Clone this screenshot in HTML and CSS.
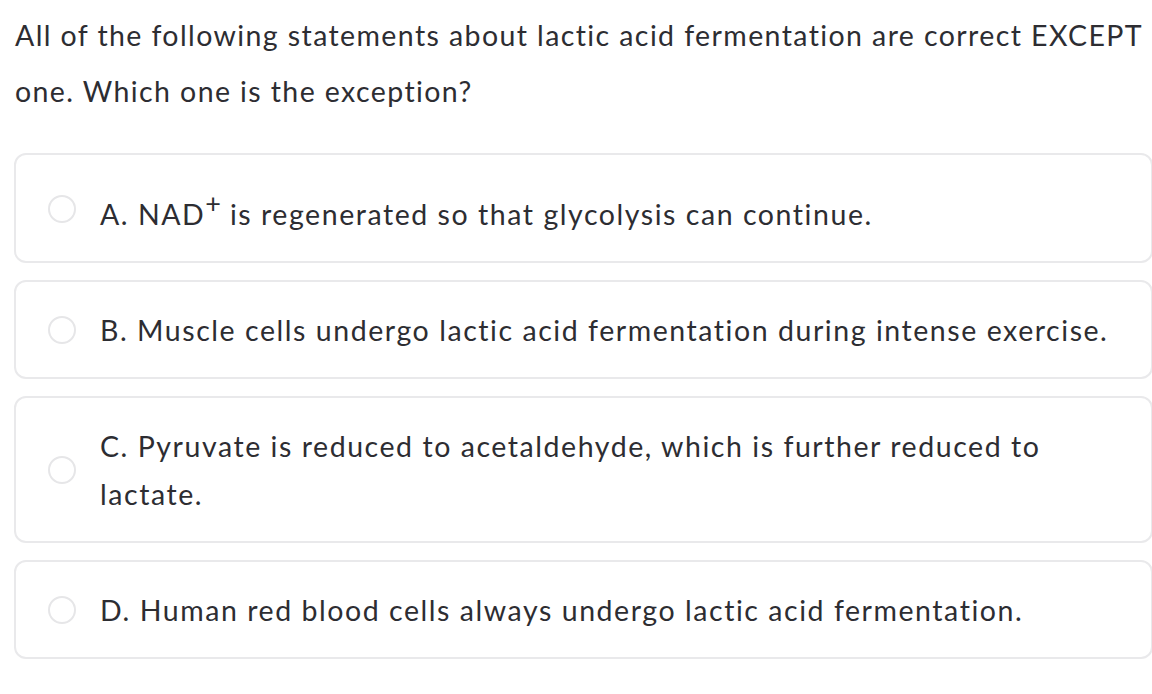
FILE: index.html
```html
<!DOCTYPE html>
<html lang="en">
<head>
<meta charset="utf-8">
<title>Question</title>
<link rel="stylesheet" href="styles.css">
</head>
<body>
<main class="quiz">
  <p class="question">All of the following statements about lactic acid fermentation are correct EXCEPT one. Which one is the exception?</p>
  <div class="options">
    <label class="option">
      <span class="radio"></span>
      <span class="text">A. NAD<sup class="sup">+</sup> is regenerated so that glycolysis can continue.</span>
    </label>
    <label class="option">
      <span class="radio"></span>
      <span class="text">B. Muscle cells undergo lactic acid fermentation during intense exercise.</span>
    </label>
    <label class="option">
      <span class="radio"></span>
      <span class="text">C. Pyruvate is reduced to acetaldehyde, which is further reduced to lactate.</span>
    </label>
    <label class="option">
      <span class="radio"></span>
      <span class="text">D. Human red blood cells always undergo lactic acid fermentation.</span>
    </label>
  </div>
</main>
</body>
</html>
```
FILE: styles.css
```css
html, body {
  margin: 0;
  padding: 0;
  background: #ffffff;
}
body {
  font-family: "Lato", "Open Sans", sans-serif;
  color: #2d2d32;
  font-size: 28.5px;
  letter-spacing: 1.4px;
  overflow: hidden;
}
.quiz {
  display: flex;
  flex-direction: column;
}
.question {
  margin: 7px 0 0 0;
  padding: 0 0 0 15px;
  width: 1135px;
  line-height: 56px;
}
.options {
  display: flex;
  flex-direction: column;
  gap: 17px;
  margin: 34px -1px 0 14px;
}
.option {
  display: flex;
  align-items: center;
  gap: 24px;
  border: 2px solid #e9e9eb;
  border-radius: 12px;
  padding: 24px 32px 23px 32px;
  line-height: 48px;
}
.radio {
  flex: 0 0 auto;
  width: 24px;
  height: 24px;
  border: 2px solid #e6e6e8;
  border-radius: 50%;
}
.text {
  flex: 1 1 auto;
  min-width: 0;
  letter-spacing: 1.55px;
}
.sup {
  font-size: 27px;
  letter-spacing: 0;
  vertical-align: 12px;
  line-height: 48px;
}
```
